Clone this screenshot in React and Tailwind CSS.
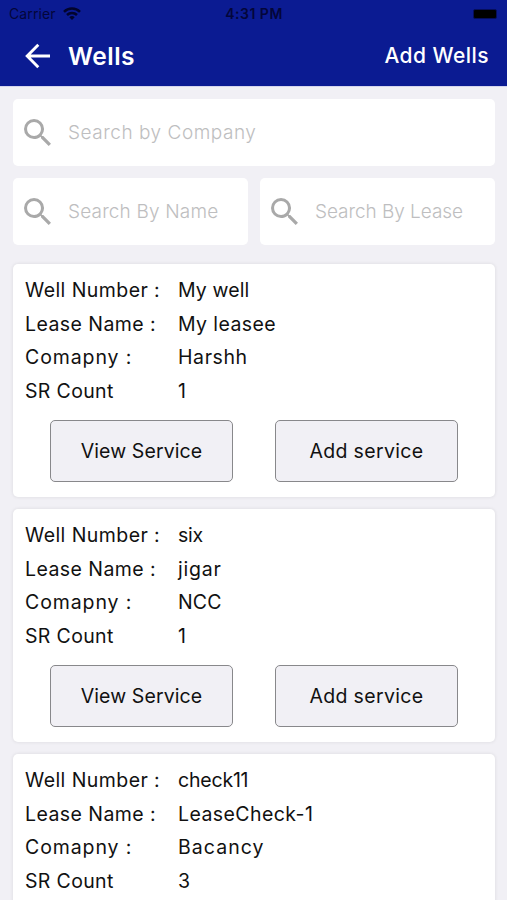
import { useState } from "react";
import clsx from "clsx";

const wells = [
  {
    id: 1,
    number: { text: "My well", spacing: "tracking-[0.1px]" },
    lease: { text: "My leasee", spacing: "tracking-[0.4px]" },
    company: { text: "Harshh", spacing: "tracking-[0.6px]" },
    count: 1,
    actions: true,
  },
  {
    id: 2,
    number: { text: "six", spacing: "tracking-[-0.2px]" },
    lease: { text: "jigar", spacing: "tracking-[0.8px]" },
    company: { text: "NCC", spacing: "tracking-[0.1px]" },
    count: 1,
    actions: true,
  },
  {
    id: 3,
    number: { text: "check11", spacing: "tracking-[-0.2px]" },
    lease: { text: "LeaseCheck-1", spacing: "tracking-[0.42px]" },
    company: { text: "Bacancy", spacing: "tracking-[1.05px]" },
    count: 3,
    actions: false,
  },
];

function StatusBar() {
  return (
    <div className="flex h-[27px] items-center justify-between pl-[9px] pr-[10px] text-[14px] text-[#03063a]">
      <div className="flex w-[120px] items-center gap-[7px]">
        <span className="tracking-[0.1px]">Carrier</span>
        <svg viewBox="0 0 18 13" className="h-[13px] w-[18px]" fill="none" stroke="#02042c" strokeWidth="2.5">
          <path d="M1 4.8C5.4.4 12.6.4 17 4.8" />
          <path d="M4 8c2.8-2.7 7.2-2.7 10 0" />
          <path d="M6.3 10.2c1.5-1.5 3.9-1.5 5.4 0L9 12.9z" fill="#02042c" stroke="none" />
        </svg>
      </div>
      <span className="pl-[2px] font-semibold tracking-[0.5px]">4:31 PM</span>
      <div className="flex w-[120px] justify-end">
        <div className="h-[10px] w-[24px] rounded-[2px] border border-[#060e5c] bg-black" />
      </div>
    </div>
  );
}

function Header() {
  return (
    <header className="h-[87px] border-b border-[#d5d6ee] bg-[#0b1b92]">
      <StatusBar />
      <div className="flex h-[58px] items-center pl-[25px] pr-[18px] text-white">
        <button aria-label="Back">
          <svg viewBox="0 0 26 26" className="h-[26px] w-[26px]" fill="none" stroke="currentColor" strokeWidth="2.9">
            <path d="M25 13H2.5M13.3 1.8 2.2 13l11.1 11.2" />
          </svg>
        </button>
        <h1 className="ml-[17px] text-[24.5px] font-semibold tracking-[0.5px]">Wells</h1>
        <button className="ml-auto text-[21px] font-medium tracking-[0.45px]">Add Wells</button>
      </div>
    </header>
  );
}

function SearchBox({ placeholder, value, onChange, className }) {
  return (
    <label className="flex h-[67px] min-w-0 flex-1 items-center rounded-[5px] bg-white pl-[11px]">
      <svg viewBox="3 3 17.5 17.5" className="mb-px h-[27px] w-[27px] shrink-0" fill="#a9a9a9">
        <path d="M15.5 14h-.79l-.28-.27A6.471 6.471 0 0 0 16 9.5 6.5 6.5 0 1 0 9.5 16c1.61 0 3.09-.59 4.23-1.57l.27.28v.79l5 4.99L20.49 19l-4.99-5zm-6 0C7.01 14 5 11.99 5 9.5S7.01 5 9.5 5 14 7.01 14 9.5 11.99 14 9.5 14z" />
      </svg>
      <input
        className={clsx(
          "ml-[17px] w-full min-w-0 pt-[2px] text-[19px] font-light text-black outline-none placeholder:text-[#bebec0]",
          className
        )}
        placeholder={placeholder}
        value={value}
        onChange={(e) => onChange(e.target.value)}
      />
    </label>
  );
}

function Row({ label, labelSpacing, value, valueSpacing }) {
  return (
    <div className="flex h-[33.8px] items-center">
      <span className={clsx("w-[153px] whitespace-pre", labelSpacing)}>{label}</span>
      <span className={valueSpacing}>{value}</span>
    </div>
  );
}

function WellCard({ well }) {
  return (
    <div className="h-[233px] shrink-0 rounded-[5px] bg-white px-3 pt-[9.5px] text-[19.5px] text-[#111] shadow-[0_0_3px_1px_rgba(0,0,0,0.06)]">
      <Row label="Well Number :" labelSpacing="tracking-[0.43px]" value={well.number.text} valueSpacing={well.number.spacing} />
      <Row label="Lease Name :" labelSpacing="tracking-[0.43px]" value={well.lease.text} valueSpacing={well.lease.spacing} />
      <Row label="Comapny :" labelSpacing="tracking-[0.9px]" value={well.company.text} valueSpacing={well.company.spacing} />
      <Row label="SR Count" labelSpacing="tracking-[0.35px]" value={well.count} />
      {well.actions && (
        <div className="mt-[11.5px] flex gap-[42px] pl-[25px]">
          <button className="h-[62px] w-[183px] rounded-[5px] border border-[#88888b] bg-[#f1f0f5] tracking-[0.1px]">
            View Service
          </button>
          <button className="h-[62px] w-[183px] rounded-[5px] border border-[#88888b] bg-[#f1f0f5] tracking-[0.35px]">
            Add service
          </button>
        </div>
      )}
    </div>
  );
}

export default function App() {
  const [company, setCompany] = useState("");
  const [name, setName] = useState("");
  const [lease, setLease] = useState("");

  return (
    <div className="h-screen w-full overflow-hidden bg-[#f1f0f5] font-['Inter',sans-serif]">
      <Header />

      {/* Filters */}
      <div className="flex flex-col gap-3 pt-[12px] pr-3 pl-[13px]">
        <div className="flex">
          <SearchBox placeholder="Search by Company" value={company} onChange={setCompany} className="tracking-[0.53px]" />
        </div>
        <div className="flex gap-3">
          <SearchBox placeholder="Search By Name" value={name} onChange={setName} className="tracking-[0.17px]" />
          <SearchBox placeholder="Search By Lease" value={lease} onChange={setLease} className="tracking-[-0.05px]" />
        </div>
      </div>

      {/* Wells list */}
      <main className="mt-[19px] flex flex-col gap-3 pr-3 pl-[13px]">
        {wells.map((well) => (
          <WellCard key={well.id} well={well} />
        ))}
      </main>
    </div>
  );
}
